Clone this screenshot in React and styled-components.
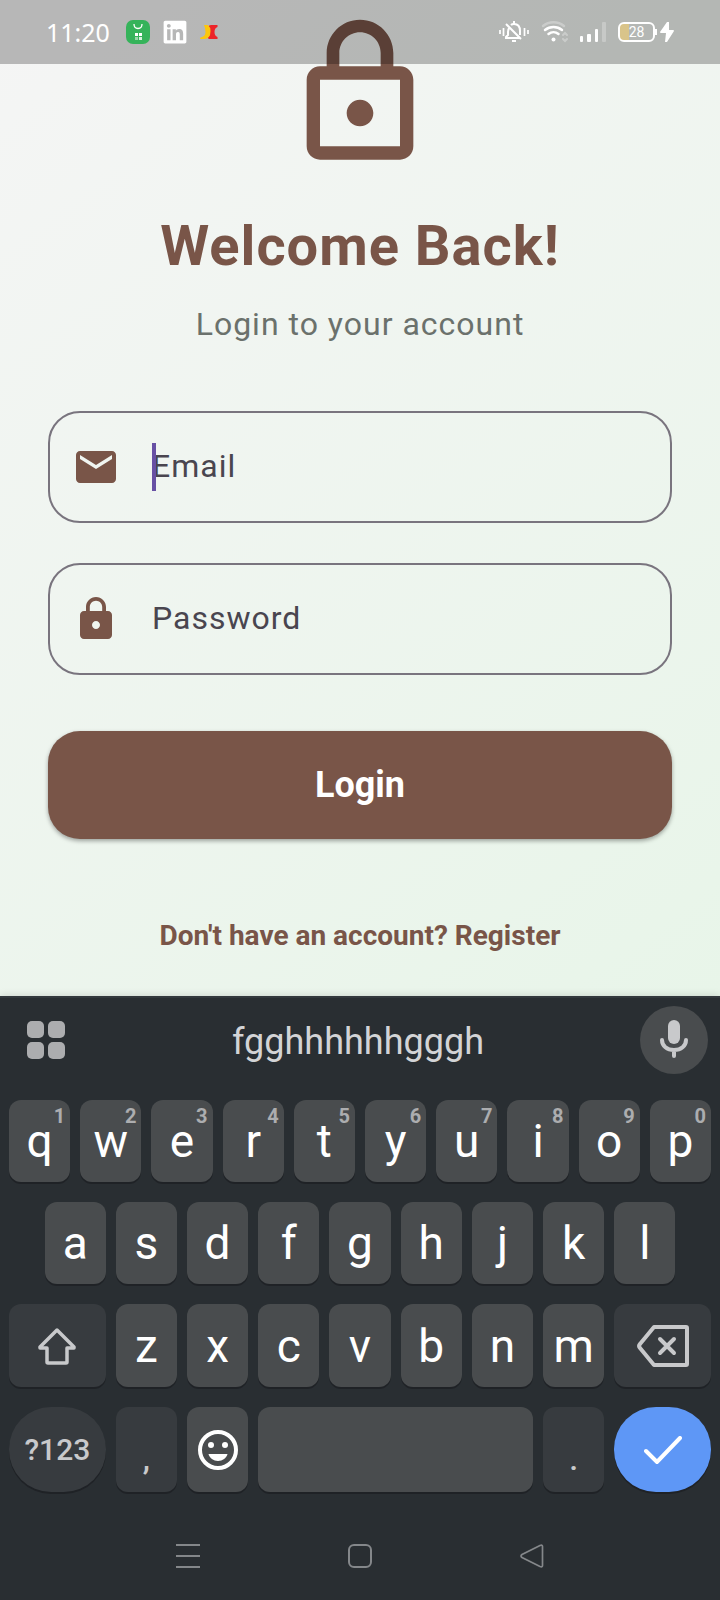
import React from "react";
import styled, { createGlobalStyle, css } from "styled-components";
import { FaLinkedin } from "react-icons/fa";

const GlobalStyle = createGlobalStyle`
  *, *::before, *::after { box-sizing: border-box; }
  body { margin: 0; font-family: Roboto, sans-serif; background: #292e32; }
  button, input { font: inherit; color: inherit; }
  button { border: 0; padding: 0; cursor: pointer; }
  svg { display: block; flex: none; }
`;

const Screen = styled.div`
  position: relative;
  display: flex;
  flex-direction: column;
  min-height: 100vh;
`;

const StatusBar = styled.header`
  position: absolute;
  inset: 0 0 auto 0;
  display: flex;
  align-items: center;
  height: 64px;
  padding: 0 46px;
  background: rgba(0, 0, 0, 0.25);
  color: #fff;
`;

const Clock = styled.time`
  margin-right: 16px;
  font: 25px/32px "Noto Sans", sans-serif;
`;

const StatusGroup = styled.div`
  display: flex;
  align-items: center;
  gap: 12px;
`;

const Spacer = styled.div`
  flex: 1;
`;

const Power = styled.div`
  display: flex;
  align-items: center;
  gap: 5px;
`;

const Battery = styled.div`
  position: relative;
  width: 37px;
  height: 20px;
  border: 2px solid #fff;
  border-radius: 6px;
  background: linear-gradient(to right, #d9c48a 9px, transparent 9px);
  font: 14px/16px Roboto, sans-serif;
  text-align: center;

  &::after {
    content: "";
    position: absolute;
    top: 5px;
    right: -4px;
    width: 2px;
    height: 6px;
    background: #fff;
  }
`;

const LoginPage = styled.main`
  flex: 1;
  display: flex;
  flex-direction: column;
  align-items: center;
  padding: 13px 48px 36px;
  background: linear-gradient(144deg, #f5f5f5, #e8f5e9);
  color: #795548;
`;

const Title = styled.h1`
  margin: 40px 0 0;
  font-size: 56px;
  line-height: 66px;
  font-weight: 700;
  letter-spacing: 1px;
`;

const Subtitle = styled.p`
  margin: 26px 0 68px;
  font-size: 32px;
  line-height: 38px;
  letter-spacing: 1px;
  color: #6b716c;
`;

const Form = styled.form`
  display: flex;
  flex-direction: column;
  gap: 40px;
  width: 100%;
`;

const FieldBox = styled.div`
  display: grid;
  grid-template-columns: 48px 1fr;
  align-items: center;
  column-gap: 32px;
  height: 112px;
  padding: 0 22px;
  border: 2px solid #79747e;
  border-radius: 32px;
`;

const FieldBody = styled.div`
  display: grid;
  align-items: start;
  height: 48px;

  & > * { grid-area: 1 / 1; }
`;

const FieldLabel = styled.label`
  font-size: 32px;
  line-height: 46px;
  letter-spacing: 1px;
  color: #49454f;
`;

const FieldInput = styled.input`
  width: 100%;
  height: 48px;
  padding: 0;
  border: 0;
  outline: 0;
  background: transparent;
  font-size: 32px;
  color: #1d1b20;
  caret-color: transparent;
`;

const Caret = styled.span`
  width: 4px;
  height: 48px;
  background: #6750a4;
`;

const SubmitButton = styled.button`
  height: 108px;
  margin-top: 16px;
  border-radius: 32px;
  background: #795548;
  box-shadow: 0 2px 4px rgba(0, 0, 0, 0.35);
  color: #fff;
  font-size: 36px;
  font-weight: 700;
`;

const RegisterLink = styled.a`
  margin-top: 80px;
  font-size: 28px;
  line-height: 34px;
  font-weight: 700;
  color: inherit;
  text-decoration: none;
`;

const Keyboard = styled.section`
  padding-bottom: 16px;
  border-top: 2px solid #33393d;
  background: #292e32;
  box-shadow: 0 0 8px rgba(0, 0, 0, 0.15);
  color: #fff;
`;

const SuggestionBar = styled.div`
  display: grid;
  grid-template-columns: 68px 1fr 68px;
  align-items: center;
  padding: 8px 12px 26px;
`;

const BarButton = styled.button`
  display: flex;
  align-items: center;
  justify-content: center;
  height: 68px;
  border-radius: 34px;
  background: ${(p) => (p.$filled ? "#494c4e" : "transparent")};
  color: #c8c9cb;
`;

const Suggestion = styled.button`
  padding: 4px 4px 0 0;
  background: transparent;
  color: #d3d4d6;
  font-size: 36px;
  line-height: 42px;
`;

const Keys = styled.div`
  display: grid;
  grid-template-columns: repeat(20, 1fr);
  grid-template-rows: 82px 82px 83px 85px;
  gap: 20px 10px;
  padding: 0 9px;
`;

const keyTones = {
  letter: css`background: #494c4e; color: #fff;`,
  side: css`background: #373b3f; color: #c8c9cb;`,
  enter: css`background: #5e97f6; color: #fff;`,
};

const Key = styled.button`
  position: relative;
  display: flex;
  align-items: center;
  justify-content: center;
  grid-column: ${(p) => (p.$start ? `${p.$start} / ` : "")}span ${(p) => p.$span || 2};
  border-radius: ${(p) => (p.$round ? 42 : 12)}px;
  box-shadow: 0 2px 0 #1f2226;
  font-size: 46px;
  line-height: 54px;
  ${(p) => keyTones[p.$tone || "letter"]}
`;

const ModeKey = styled(Key)`
  font-size: 30px;
  font-weight: 500;
`;

const PunctuationKey = styled(Key)`
  align-items: flex-end;
  padding-bottom: 14px;
  font-size: 32px;
  line-height: 38px;
  font-weight: 500;
`;

const Hint = styled.span`
  position: absolute;
  top: 4px;
  right: 5px;
  color: #acadaf;
  font-size: 20px;
  line-height: 24px;
  font-weight: 700;
`;

const NavBar = styled.nav`
  display: flex;
  justify-content: center;
  gap: 148px;
  padding: 52px 0 16px;
`;

const NavButton = styled.button`
  background: transparent;
  color: #84878a;
`;

const MaterialIcon = ({ size, path }) => (
  <svg width={size} height={size} viewBox="0 0 24 24" fill="currentColor" aria-hidden="true">
    <path d={path} />
  </svg>
);

const paths = {
  lockOutline:
    "M12 17c1.1 0 2-.9 2-2s-.9-2-2-2-2 .9-2 2 .9 2 2 2zm6-9h-1V6c0-2.76-2.24-5-5-5S7 3.24 7 6v2H6c-1.1 0-2 .9-2 2v10c0 1.1.9 2 2 2h12c1.1 0 2-.9 2-2V10c0-1.1-.9-2-2-2zM8.9 6c0-1.71 1.39-3.1 3.1-3.1s3.1 1.39 3.1 3.1v2H8.9V6zM18 20H6V10h12v10z",
  lock:
    "M18 8h-1V6c0-2.76-2.24-5-5-5S7 3.24 7 6v2H6c-1.1 0-2 .9-2 2v10c0 1.1.9 2 2 2h12c1.1 0 2-.9 2-2V10c0-1.1-.9-2-2-2zm-6 9c-1.1 0-2-.9-2-2s.9-2 2-2 2 .9 2 2-.9 2-2 2zm3.1-9H8.9V6c0-1.71 1.39-3.1 3.1-3.1 1.71 0 3.1 1.39 3.1 3.1v2z",
  mail:
    "M20 4H4c-1.1 0-2 .9-2 2v12c0 1.1.9 2 2 2h16c1.1 0 2-.9 2-2V6c0-1.1-.9-2-2-2zm0 4l-8 5-8-5V6l8 5 8-5v2z",
};

const ShopIcon = () => (
  <svg width="24" height="24" viewBox="0 0 24 24" aria-hidden="true">
    <rect width="24" height="24" rx="7" fill="#35b35a" />
    <path d="M8 4c0 6 8 6 8 0" fill="none" stroke="#fff" strokeWidth="1.3" />
    <path d="M9 13h3v3H9zM13 13h3v3h-3z" fill="#fff" />
    <path d="M9 17h3v3H9z" fill="#9bd6ab" />
    <path d="M13 17h3v3h-3z" fill="#d6f0dd" />
  </svg>
);

const BrandIcon = () => (
  <svg width="18" height="14" viewBox="0 0 18 14" aria-hidden="true">
    <path d="M8 2q1-2 3-2h6.500v2q-3 1-3 5t3 5v2H9q-2-1-1-2 2-1 2-5T8 2z" fill="#ed2429" />
    <path d="M4 0h4q2.500 2 2.500 6 0 8-6.500 8H0q0-2 2-2 3.500-1 3.500-5 0-4-1.500-7z" fill="#fdc70c" />
  </svg>
);

const MutedBellIcon = () => (
  <svg width="30" height="22" viewBox="0 0 30 22" fill="none" stroke="#fff" strokeWidth="2" aria-hidden="true">
    <path d="M1 9v4M4.500 7v8M25.500 7v8M29 9v4" strokeWidth="1.700" />
    <path d="M11 6c-1 1-2 3-2 5v3l-2 2v1h14M12 4c1-1 2-1 3-1 4 0 6 3 6 7v4M7 3l15 15" />
    <path d="M13 20h4M15 0v3" />
  </svg>
);

const WifiIcon = () => (
  <svg width="27" height="22" viewBox="0 0 27 22" fill="none" stroke="#fff" strokeWidth="2.500" strokeLinecap="round" aria-hidden="true">
    <path d="M2 5c6-5 15-5 21 0" opacity=".3" />
    <path d="M4 9c5-4 12-4 17 0M7.500 13c3-2.500 7-2.500 10 0" />
    <circle cx="12.500" cy="18.500" r="2" fill="#fff" stroke="none" />
    <path d="M22 14l2-2 2 2M22 18l2 2 2-2" opacity=".3" strokeWidth="2" />
  </svg>
);

const SignalIcon = () => (
  <svg width="26" height="20" viewBox="0 0 26 20" fill="#fff" aria-hidden="true">
    <rect y="14" width="3" height="6" rx="1" />
    <rect x="7" y="12" width="4" height="8" rx="1" />
    <rect x="15" y="7" width="3" height="13" rx="1" />
    <rect x="22" width="4" height="20" rx="1" opacity=".25" />
  </svg>
);

const BoltIcon = () => (
  <svg width="14" height="20" viewBox="0 0 14 20" fill="#fff" aria-hidden="true">
    <path d="M7 0L0 10q0 1 1 1h5l-1 9h2l7-11q0-1-1-1H9V0z" />
  </svg>
);

const AppsIcon = () => (
  <svg width="38" height="38" viewBox="0 0 38 38" fill="#acadaf" aria-hidden="true">
    <rect width="17" height="17" rx="5" />
    <rect x="21" width="17" height="17" rx="5" />
    <rect y="21" width="17" height="17" rx="5" />
    <rect x="21" y="21" width="17" height="17" rx="5" />
  </svg>
);

const MicIcon = () => (
  <svg width="28" height="40" viewBox="0 0 28 40" fill="none" aria-hidden="true">
    <rect x="8" y="0" width="12" height="24" rx="6" fill="currentColor" />
    <path d="M2 20c0 6 5 10 12 10s12-4 12-10M14 30v6" stroke="currentColor" strokeWidth="4" strokeLinecap="round" />
  </svg>
);

const ShiftIcon = () => (
  <svg width="40" height="38" viewBox="0 0 40 38" fill="none" stroke="currentColor" strokeLinejoin="round" aria-hidden="true">
    <path d="M20 3L3 20v1h7v14q0 1 1 1h18q1 0 1-1V21h7v-1z" strokeWidth="3.500" />
  </svg>
);

const BackspaceIcon = () => (
  <svg width="52" height="42" viewBox="0 0 52 42" fill="none" stroke="currentColor" strokeWidth="4" strokeLinejoin="round" strokeLinecap="round" aria-hidden="true">
    <path d="M17 2h32q1 0 1 1v36q0 1-1 1H17L3 23q-2-2 0-4z" />
    <path d="M23 14l14 14M37 14L23 28" />
  </svg>
);

const SmileIcon = () => (
  <svg width="40" height="40" viewBox="0 0 40 40" fill="currentColor" aria-hidden="true">
    <circle cx="20" cy="20" r="18" fill="none" stroke="currentColor" strokeWidth="4" />
    <circle cx="13" cy="15" r="3" />
    <circle cx="27" cy="15" r="3" />
    <path d="M10.500 24h19c-1 4-5 7-9.500 7s-8.500-3-9.500-7z" />
  </svg>
);

const CheckIcon = () => (
  <svg width="38" height="28" viewBox="0 0 38 28" fill="none" stroke="currentColor" strokeWidth="4" strokeLinecap="round" aria-hidden="true">
    <path d="M2 15l11 11L36 2" />
  </svg>
);

const navItems = [
  { label: "Recent apps", art: <path d="M0 1h24M0 12h24M0 23h24" /> },
  { label: "Home", art: <rect x="1" y="1" width="22" height="22" rx="5" /> },
  { label: "Back", art: <path d="M20 1.500L2 10.500q-2 1.500 0 3L20 22.500q2.500 1 2.500-1v-19q0-2-2.500-1z" strokeWidth="1.700" /> },
];

const Field = ({ id, label, type, icon, focused }) => (
  <FieldBox>
    <MaterialIcon size={48} path={paths[icon]} />
    <FieldBody>
      <FieldLabel htmlFor={id}>{label}</FieldLabel>
      <FieldInput id={id} type={type} />
      {focused && <Caret />}
    </FieldBody>
  </FieldBox>
);

export default function App() {
  return (
    <Screen>
      <GlobalStyle />
      <LoginPage>
        <MaterialIcon size={160} path={paths.lockOutline} />
        <Title>Welcome Back!</Title>
        <Subtitle>Login to your account</Subtitle>
        <Form onSubmit={(e) => e.preventDefault()}>
          <Field id="email" label="Email" type="email" icon="mail" focused />
          <Field id="password" label="Password" type="password" icon="lock" />
          <SubmitButton type="submit">Login</SubmitButton>
        </Form>
        <RegisterLink href="#register">Don't have an account? Register</RegisterLink>
      </LoginPage>

      <StatusBar>
        <Clock>11:20</Clock>
        <StatusGroup>
          <ShopIcon />
          <FaLinkedin size={26} />
          <BrandIcon />
        </StatusGroup>
        <Spacer />
        <StatusGroup>
          <MutedBellIcon />
          <WifiIcon />
          <SignalIcon />
          <Power>
            <Battery>28</Battery>
            <BoltIcon />
          </Power>
        </StatusGroup>
      </StatusBar>

      <Keyboard aria-label="Keyboard">
        <SuggestionBar>
          <BarButton aria-label="Keyboard menu"><AppsIcon /></BarButton>
          <Suggestion>fgghhhhhhgggh</Suggestion>
          <BarButton $filled aria-label="Voice input"><MicIcon /></BarButton>
        </SuggestionBar>
        <Keys>
          {[..."qwertyuiop"].map((letter, i) => (
            <Key key={letter}>
              {letter}
              <Hint>{(i + 1) % 10}</Hint>
            </Key>
          ))}
          {[..."asdfghjkl"].map((letter, i) => (
            <Key key={letter} $start={i === 0 ? 2 : undefined}>{letter}</Key>
          ))}
          <Key $start={1} $span={3} $tone="side" aria-label="Shift"><ShiftIcon /></Key>
          {[..."zxcvbnm"].map((letter) => (
            <Key key={letter}>{letter}</Key>
          ))}
          <Key $span={3} $tone="side" aria-label="Backspace"><BackspaceIcon /></Key>
          <ModeKey $span={3} $tone="side" $round>?123</ModeKey>
          <PunctuationKey $tone="side">,</PunctuationKey>
          <Key aria-label="Emoji"><SmileIcon /></Key>
          <Key $span={8} aria-label="Space" />
          <PunctuationKey $tone="side">.</PunctuationKey>
          <Key $span={3} $tone="enter" $round aria-label="Done"><CheckIcon /></Key>
        </Keys>
        <NavBar aria-label="System navigation">
          {navItems.map((item) => (
            <NavButton key={item.label} aria-label={item.label}>
              <svg width="24" height="24" viewBox="0 0 24 24" fill="none" stroke="currentColor" strokeWidth="2" aria-hidden="true">
                {item.art}
              </svg>
            </NavButton>
          ))}
        </NavBar>
      </Keyboard>
    </Screen>
  );
}
